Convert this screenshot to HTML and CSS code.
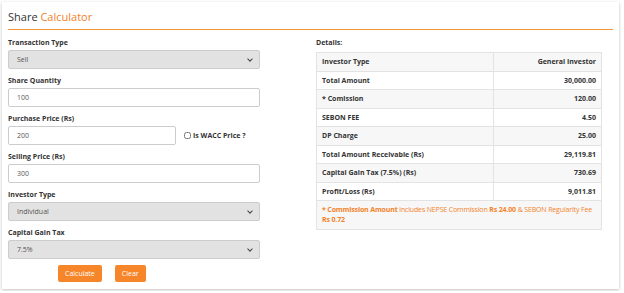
FILE: index.html
```html
<!DOCTYPE html>
<html lang="en">
<head>
    <meta charset="UTF-8">
    <meta name="viewport" content="width=device-width, initial-scale=1.0">
    <title>Share Calculator</title>
    <link rel="stylesheet" href="styles.css">
</head>
<body>
    <div class="card">
        <div class="card-header">
            <h2>Share <span>Calculator</span></h2>
        </div>
        <div class="card-body">
            <form class="calc-form">
                <div class="form-group">
                    <label>Transaction Type</label>
                    <div class="select disabled">Sell<span class="caret"></span></div>
                </div>
                <div class="form-group">
                    <label>Share Quantity</label>
                    <input type="text" value="100">
                </div>
                <div class="form-group">
                    <label>Purchase Price (Rs)</label>
                    <div class="inline-row">
                        <input type="text" value="200" class="short">
                        <label class="check"><input type="checkbox"> Is WACC Price ?</label>
                    </div>
                </div>
                <div class="form-group">
                    <label>Selling Price (Rs)</label>
                    <input type="text" value="300">
                </div>
                <div class="form-group">
                    <label>Investor Type</label>
                    <div class="select disabled">Individual<span class="caret"></span></div>
                </div>
                <div class="form-group">
                    <label>Capital Gain Tax</label>
                    <div class="select disabled">7.5%<span class="caret"></span></div>
                </div>
                <div class="buttons">
                    <button type="button" class="btn">Calculate</button>
                    <button type="button" class="btn">Clear</button>
                </div>
            </form>
            <div class="details">
                <div class="details-title">Details:</div>
                <table class="result-table">
                    <tr><td>Investor Type</td><td>General Investor</td></tr>
                    <tr><td>Total Amount</td><td>30,000.00</td></tr>
                    <tr><td>* Comission</td><td>120.00</td></tr>
                    <tr><td>SEBON FEE</td><td>4.50</td></tr>
                    <tr><td>DP Charge</td><td>25.00</td></tr>
                    <tr><td>Total Amount Receivable (Rs)</td><td>29,119.81</td></tr>
                    <tr><td>Capital Gain Tax (7.5%) (Rs)</td><td>730.69</td></tr>
                    <tr><td>Profit/Loss (Rs)</td><td>9,011.81</td></tr>
                    <tr class="note"><td colspan="2"><b>* Commission Amount</b> includes NEPSE Commission <b>Rs 24.00</b> &amp; SEBON Regularity Fee <b>Rs 0.72</b></td></tr>
                </table>
            </div>
        </div>
    </div>
</body>
</html>
```

FILE: styles.css
```css
body {
    font-family: "Open Sans", Arial, sans-serif;
    margin: 0;
    padding: 2px;
    background-color: #fff;
    color: #333;
}
.card {
    width: 617px;
    height: 287px;
    box-sizing: border-box;
    background-color: white;
    box-shadow: 0 1px 3px rgba(0,0,0,0.25);
    padding: 0 6px;
}
.card-header {
    border-bottom: 1px solid #f5923e;
    height: 28px;
    box-sizing: border-box;
    padding-top: 8px;
}
.card-header h2 {
    margin: 0;
    font-size: 11px;
    font-weight: 400;
    line-height: 14px;
    color: #333;
}
.card-header h2 span {
    color: #f5822a;
}
.card-body {
    display: flex;
    padding-top: 7px;
}
.calc-form {
    width: 304px;
}
.form-group {
    margin-bottom: 6px;
}
.form-group > label {
    display: block;
    font-size: 7px;
    font-weight: 700;
    line-height: 11px;
    margin-bottom: 2px;
}
.form-group input[type=text],
.select {
    display: block;
    width: 252px;
    height: 19px;
    box-sizing: border-box;
    border: 1px solid #ccc;
    border-radius: 2px;
    padding: 0 8px;
    font-family: inherit;
    font-size: 7px;
    color: #555;
    line-height: 17px;
    margin: 0;
    outline: none;
}
.form-group input.short {
    width: 168px;
}
.select.disabled {
    background-color: #e2e2e2;
    position: relative;
}
.caret {
    position: absolute;
    right: 7px;
    top: 6px;
    width: 3px;
    height: 3px;
    border-right: 1.2px solid #444;
    border-bottom: 1.2px solid #444;
    transform: rotate(45deg);
}
.inline-row {
    display: flex;
    align-items: center;
}
.check {
    display: flex;
    align-items: center;
    margin-left: 8px;
    font-size: 7px;
    font-weight: 700;
}
.check input {
    width: 7px;
    height: 7px;
    margin: 0 2px 0 0;
}
.buttons {
    display: flex;
    gap: 13px;
    padding-left: 50px;
    margin-top: 2px;
}
.btn {
    background-color: #f7862a;
    color: white;
    border: none;
    border-radius: 2px;
    font-family: inherit;
    font-size: 7px;
    height: 17px;
    padding: 0 7px;
    cursor: pointer;
}
.details {
    flex: 1;
    padding-left: 4px;
}
.details-title {
    font-size: 7px;
    font-weight: 700;
    line-height: 11px;
    margin-bottom: 4px;
}
.result-table {
    width: 286px;
    border-collapse: collapse;
    font-size: 7px;
    font-weight: 700;
    border: 1px solid #e3e3e3;
}
.result-table td {
    border: 1px solid #e3e3e3;
    height: 18.5px;
    box-sizing: border-box;
    padding: 0 5px;
}
.result-table td:first-child {
    width: 177px;
}
.result-table td:last-child {
    text-align: right;
}
.result-table tr:nth-child(odd) td {
    background-color: #f7f7f7;
}
.result-table .note td {
    text-align: left;
    font-weight: 400;
    color: #f5822a;
    padding: 4px 2px 4px 5px;
    line-height: 10px;
    letter-spacing: -0.15px;
}
```
